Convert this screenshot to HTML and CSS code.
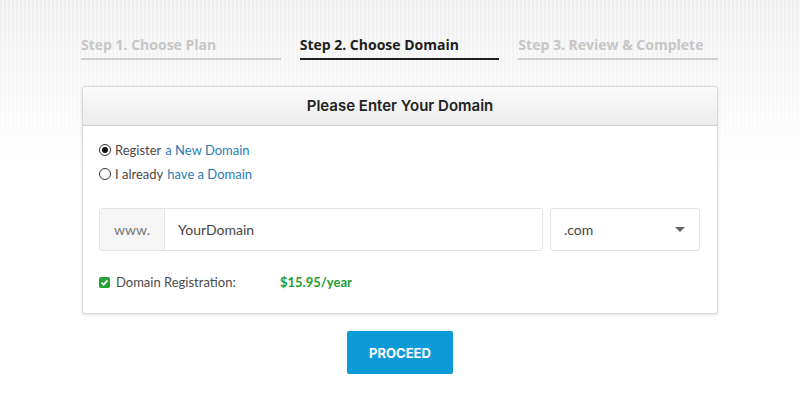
FILE: index.html
```html
<!DOCTYPE html>
<html lang="en">
<head>
    <meta charset="UTF-8">
    <meta name="viewport" content="width=device-width, initial-scale=1.0">
    <title>Choose Domain</title>
    <link rel="stylesheet" href="styles.css">
</head>
<body>
    <div class="wrap">
        <div class="steps">
            <div class="step">Step 1. Choose Plan</div>
            <div class="step active">Step 2. Choose Domain</div>
            <div class="step">Step 3. Review &amp; Complete</div>
        </div>

        <div class="card">
            <div class="card-head">Please Enter Your Domain</div>
            <div class="card-body">
                <label class="radio-row">
                    <span class="radio checked"></span>
                    Register <a href="#">a New Domain</a>
                </label>
                <label class="radio-row">
                    <span class="radio"></span>
                    I already <a href="#">have a Domain</a>
                </label>

                <div class="domain-row">
                    <div class="input-group">
                        <span class="addon">www.</span>
                        <span class="domain-input">YourDomain</span>
                    </div>
                    <div class="select">
                        <span>.com</span>
                        <span class="caret"></span>
                    </div>
                </div>

                <div class="reg-row">
                    <span class="check">
                        <svg width="9" height="9" viewBox="0 0 9 9"><path d="M1.5 4.6 L3.6 6.6 L7.5 2.4" fill="none" stroke="#fff" stroke-width="1.8"/></svg>
                    </span>
                    <span class="reg-label">Domain Registration:</span>
                    <span class="price">$15.95/year</span>
                </div>
            </div>
        </div>

        <div class="actions">
            <button type="button">PROCEED</button>
        </div>
    </div>
</body>
</html>
```

FILE: styles.css
```css
body {
    margin: 0;
    height: 408px;
    font-family: Lato, "Open Sans", Arial, sans-serif;
    color: #555;
    background:
        linear-gradient(to bottom, rgba(255,255,255,0) 0, #fff 170px),
        repeating-linear-gradient(90deg, #eeeeee 0 2px, #f6f6f6 2px 4px);
}
.wrap {
    width: 636px;
    margin: 0 auto;
    padding-top: 36px;
}
.steps {
    display: flex;
    gap: 20px;
}
.step {
    flex: 1;
    font-family: "Open Sans", Arial, sans-serif;
    font-size: 14px;
    font-weight: 700;
    color: #c6c6c6;
    padding-bottom: 4px;
    border-bottom: 2px solid #cfcfcf;
    line-height: 18px;
    margin-left: -1px;
}
.step.active {
    color: #1e1e1e;
    border-bottom-color: #1e1e1e;
}
.card {
    margin-top: 26px;
    background: #fff;
    border: 1px solid #d9d9d9;
    border-radius: 3px;
    box-shadow: 0 1px 3px rgba(0,0,0,0.12);
}
.card-head {
    height: 38px;
    line-height: 38px;
    text-align: center;
    font-family: Inter, Roboto, sans-serif;
    font-weight: 600;
    font-size: 15px;
    color: #222;
    background: linear-gradient(#fbfbfb, #ececec);
    border-bottom: 1px solid #cfcfcf;
    border-radius: 3px 3px 0 0;
}
.card-body {
    padding: 12px 17px 20px 16px;
}
.radio-row {
    display: flex;
    align-items: center;
    height: 24px;
    font-size: 13px;
    color: #4a4a4a;
    gap: 4px;
}
.radio-row a {
    color: #2b7bb5;
    text-decoration: none;
}
.radio {
    width: 10px;
    height: 10px;
    border: 1px solid #333;
    border-radius: 50%;
    position: relative;
}
.radio.checked::after {
    content: "";
    position: absolute;
    left: 2px;
    top: 2px;
    width: 6px;
    height: 6px;
    border-radius: 50%;
    background: #111;
}
.domain-row {
    display: flex;
    gap: 7px;
    margin-top: 22px;
}
.input-group {
    flex: 1;
    display: flex;
    height: 43px;
    box-sizing: border-box;
    border: 1px solid #e3e3e3;
    border-radius: 3px;
}
.addon {
    width: 64px;
    display: flex;
    align-items: center;
    justify-content: center;
    background: #f6f6f6;
    border-right: 1px solid #e3e3e3;
    font-size: 14px;
    color: #777;
}
.domain-input {
    display: flex;
    align-items: center;
    padding-left: 13px;
    font-size: 14px;
    color: #444;
}
.select {
    height: 43px;
    box-sizing: border-box;
    width: 150px;
    border: 1px solid #e3e3e3;
    border-radius: 3px;
    display: flex;
    align-items: center;
    justify-content: space-between;
    padding: 0 14px 0 13px;
    font-size: 14px;
    color: #444;
}
.caret {
    width: 0;
    height: 0;
    border-left: 5px solid transparent;
    border-right: 5px solid transparent;
    border-top: 5px solid #666;
}
.reg-row {
    display: flex;
    align-items: center;
    height: 22px;
    margin-top: 20px;
    font-size: 13px;
}
.check {
    width: 11px;
    height: 11px;
    background: #25a234;
    border-radius: 2px;
    display: flex;
    align-items: center;
    justify-content: center;
    margin-right: 6px;
}
.reg-label {
    width: 164px;
    color: #4a4a4a;
}
.price {
    color: #22a02e;
    font-weight: 700;
}
.actions {
    text-align: center;
    margin-top: 17px;
}
button {
    width: 106px;
    height: 43px;
    border: none;
    border-radius: 2px;
    background: #0d9bd8;
    color: #fff;
    font-family: Inter, Roboto, sans-serif;
    font-weight: 700;
    font-size: 13px;
    cursor: pointer;
}
```
